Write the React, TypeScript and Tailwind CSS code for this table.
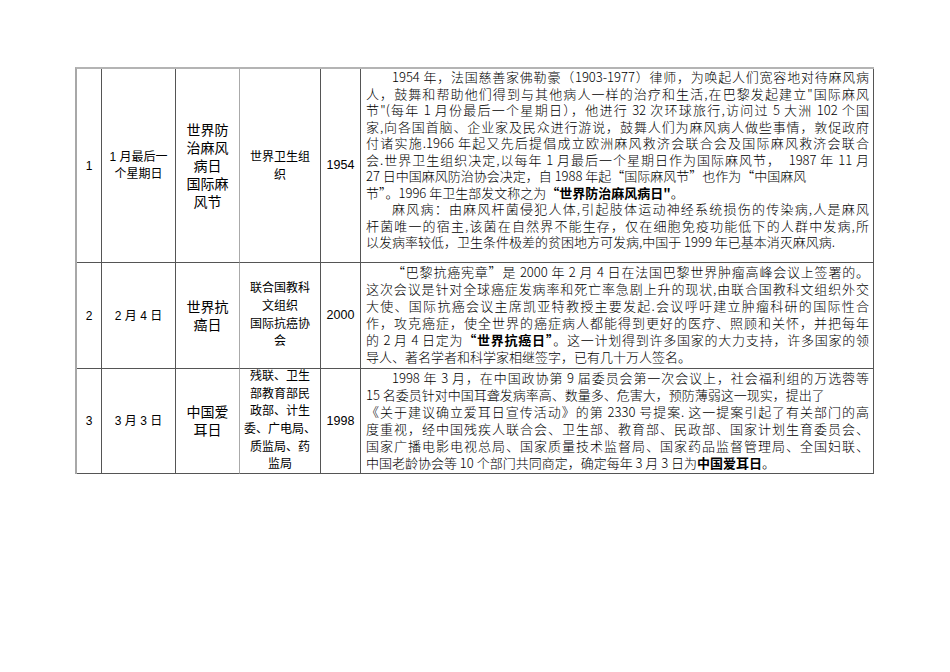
import React from 'react';

const sans = 'font-["Liberation_Sans","Noto_Sans_CJK_SC",sans-serif]';

function Line({ children, full = true, indent = false }: { children: React.ReactNode; full?: boolean; indent?: boolean }) {
  const cls = [
    full ? 'text-justify [text-align-last:justify] whitespace-pre-wrap' : 'whitespace-pre',
    indent ? 'indent-[26px]' : '',
  ].join(' ');
  return <div className={cls}>{children}</div>;
}

function Center({ children, className = '' }: { children: React.ReactNode; className?: string }) {
  return (
    <div className={`flex items-center justify-center text-center border-r border-b border-[#555] ${className}`}>
      <div>{children}</div>
    </div>
  );
}

export default function App() {
  return (
    <main className="min-h-[672px] w-[950px] bg-white text-black">
      <div className="pt-[67px] pl-[75px]">
        <div
          className={`grid w-fit grid-cols-[25px_74px_64px_81px_40px_513px] grid-rows-[194px_106px_105px] border-t-2 border-l-2 border-t-[#b4b4b4] border-l-[#a8a8a8] ${sans}`}
        >
          {/* row 1 */}
          <Center className="text-[12px]">1</Center>
          <Center className="text-[12px] leading-[16.7px]">
            <div>1 月最后一</div>
            <div>个星期日</div>
          </Center>
          <Center className="text-[14px] leading-[18px] !border-r-[#aaa]">
            <div>世界防</div>
            <div>治麻风</div>
            <div>病日</div>
            <div>国际麻</div>
            <div>风节</div>
          </Center>
          <Center className="text-[12px] leading-[18px]">
            <div>世界卫生组</div>
            <div>织</div>
          </Center>
          <Center className="text-[12.5px]">1954</Center>
          <div className='overflow-hidden border-r border-b border-[#555] pl-[5px] pr-[4px] text-[13px] leading-[16.5px] font-["Noto_Sans_CJK_SC","Liberation_Sans",sans-serif] font-light'>
            <Line indent>1954 年，法国慈善家佛勒豪（1903-1977）律师，为唤起人们宽容地对待麻风病</Line>
            <Line>人，鼓舞和帮助他们得到与其他病人一样的治疗和生活,在巴黎发起建立"国际麻风</Line>
            <Line>节"(每年 1 月份最后一个星期日），他进行 32 次环球旅行,访问过 5 大洲 102 个国</Line>
            <Line>家,向各国首脑、企业家及民众进行游说，鼓舞人们为麻风病人做些事情，敦促政府</Line>
            <Line>付诸实施.1966 年起又先后提倡成立欧洲麻风救济会联合会及国际麻风救济会联合</Line>
            <Line>会.世界卫生组织决定,以每年 1 月最后一个星期日作为国际麻风节，  1987 年 11 月</Line>
            <Line full={false}>27 日中国麻风防治协会决定，自 1988 年起“国际麻风节”也作为“中国麻风</Line>
            <Line full={false}>
              节”。1996 年卫生部发文称之为<span className="font-bold">“世界防治麻风病日"</span>。
            </Line>
            <Line indent>麻风病：由麻风杆菌侵犯人体,引起肢体运动神经系统损伤的传染病,人是麻风</Line>
            <Line>杆菌唯一的宿主,该菌在自然界不能生存，仅在细胞免疫功能低下的人群中发病,所</Line>
            <Line full={false}>以发病率较低，卫生条件极差的贫困地方可发病,中国于 1999 年已基本消灭麻风病.</Line>
          </div>

          {/* row 2 */}
          <Center className="text-[12px]">2</Center>
          <Center className="text-[12px]">2 月 4 日</Center>
          <Center className="text-[14px] leading-[18px] !border-r-[#aaa]">
            <div>世界抗</div>
            <div>癌日</div>
          </Center>
          <Center className="text-[12px] leading-[17.6px]">
            <div>联合国教科</div>
            <div>文组织</div>
            <div>国际抗癌协</div>
            <div>会</div>
          </Center>
          <Center className="text-[12.5px]">2000</Center>
          <div className='overflow-hidden border-r border-b border-[#555] pl-[5px] pr-[4px] text-[13px] leading-[17px] font-["Noto_Sans_CJK_SC","Liberation_Sans",sans-serif] font-light'>
            <Line indent>“巴黎抗癌宪章”是 2000 年 2 月 4 日在法国巴黎世界肿瘤高峰会议上签署的。</Line>
            <Line>这次会议是针对全球癌症发病率和死亡率急剧上升的现状,由联合国教科文组织外交</Line>
            <Line>大使、国际抗癌会议主席凯亚特教授主要发起.会议呼吁建立肿瘤科研的国际性合</Line>
            <Line>作，攻克癌症，使全世界的癌症病人都能得到更好的医疗、照顾和关怀，并把每年</Line>
            <Line>
              的 2 月 4 日定为<span className="font-bold">“世界抗癌日”</span>。这一计划得到许多国家的大力支持，许多国家的领
            </Line>
            <Line full={false}>导人、著名学者和科学家相继签字，已有几十万人签名。</Line>
          </div>

          {/* row 3 */}
          <Center className="text-[12px]">3</Center>
          <Center className="text-[12px]">3 月 3 日</Center>
          <Center className="text-[14px] leading-[18px] !border-r-[#aaa]">
            <div>中国爱</div>
            <div>耳日</div>
          </Center>
          <Center className="text-[12px] leading-[17.6px]">
            <div>残联、卫生</div>
            <div>部教育部民</div>
            <div>政部、计生</div>
            <div>委、广电局、</div>
            <div>质监局、药</div>
            <div>监局</div>
          </Center>
          <Center className="text-[12.5px]">1998</Center>
          <div className='overflow-hidden border-r border-b border-[#555] pl-[5px] pr-[4px] text-[13px] leading-[17px] font-["Noto_Sans_CJK_SC","Liberation_Sans",sans-serif] font-light'>
            <Line indent>1998 年 3 月，在中国政协第 9 届委员会第一次会议上，社会福利组的万选蓉等</Line>
            <Line full={false}>15 名委员针对中国耳聋发病率高、数量多、危害大，预防薄弱这一现实，提出了</Line>
            <Line>《关于建议确立爱耳日宣传活动》的第 2330 号提案. 这一提案引起了有关部门的高</Line>
            <Line>度重视，经中国残疾人联合会、卫生部、教育部、民政部、国家计划生育委员会、</Line>
            <Line>国家广播电影电视总局、国家质量技术监督局、国家药品监督管理局、全国妇联、</Line>
            <Line full={false}>
              中国老龄协会等 10 个部门共同商定，确定每年 3 月 3 日为<span className="font-bold">中国爱耳日</span>。
            </Line>
          </div>
        </div>
      </div>
    </main>
  );
}
